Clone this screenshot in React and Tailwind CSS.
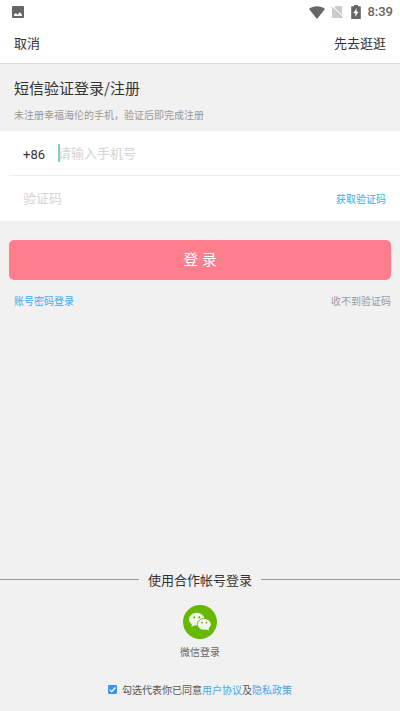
import React, { useState } from "react";

function StatusBar() {
    return (
        <div className="flex h-6 items-center justify-between pl-3 pr-[7px] text-[#666666]">
            <svg viewBox="0 0 12 12" className="h-3 w-3" aria-hidden="true">
                <rect width="12" height="12" rx="1" fill="currentColor" />
                <path d="M2 10V8.8L3.8 7l1.6 1.8L7.8 6.2 10 8.8V10z" fill="#fff" />
            </svg>
            <div className="flex items-center">
                <svg viewBox="0 0 16 13" className="h-[13px] w-4" aria-hidden="true">
                    <path d="M8 13 0 3C2.200 1.200 5 .3 8 .3S13.800 1.200 16 3z" fill="currentColor" />
                </svg>
                <svg viewBox="0 0 12 14" className="ml-[6px] h-[14px] w-3" aria-hidden="true">
                    <path d="M4.500 1H10a1 1 0 0 1 1 1v11H2a1 1 0 0 1-1-1V4.500z" fill="#cccccc" />
                    <path d="M1.200 1.200 12.200 12.200" stroke="#fff" strokeWidth="1.200" />
                    <path d="M.4 2 11.400 13" stroke="#b5b5b5" strokeWidth="1" />
                </svg>
                <svg viewBox="0 0 10 14" className="ml-2 h-[14px] w-[10px]" aria-hidden="true">
                    <path d="M3 0h4v1.300h2.200a.6.6 0 0 1 .6.6v11.500a.6.6 0 0 1-.6.6H.8a.6.6 0 0 1-.6-.6V1.900a.6.6 0 0 1 .6-.6H3z" fill="currentColor" />
                    <path d="M5.800 3 2.300 8.300h2.200L4 12l3.600-5.300H5.400z" fill="#fff" />
                </svg>
                <span className="ml-[6px] font-[Roboto,sans-serif] text-[13px] font-medium leading-4">8:39</span>
            </div>
        </div>
    );
}

function WechatIcon() {
    return (
        <svg viewBox="0 0 34 34" className="h-[34px] w-[34px]" aria-hidden="true">
            <circle cx="17" cy="17" r="17" fill="#66b800" />
            <g fill="#f1f5ea">
                <ellipse cx="13.700" cy="14.200" rx="7.700" ry="6.400" />
                <path d="M9 18.500 8.300 22l3.700-2z" />
            </g>
            <ellipse cx="21.200" cy="19.300" rx="7.300" ry="6.200" fill="#66b800" />
            <g fill="#f1f5ea">
                <ellipse cx="21.200" cy="19.300" rx="6.600" ry="5.500" />
                <path d="m23 24 3 1.800-.5-3.300z" />
            </g>
            <g fill="#66b800">
                <circle cx="11.200" cy="12.200" r="1" />
                <circle cx="16.300" cy="12.200" r="1" />
                <circle cx="19" cy="17.700" r=".85" />
                <circle cx="23.400" cy="17.700" r=".85" />
            </g>
        </svg>
    );
}

export default function App() {
    const [phone, setPhone] = useState("");
    const [code, setCode] = useState("");
    const [agreed, setAgreed] = useState(true);

    return (
        <div className="flex min-h-screen flex-col bg-[#f1f1f1] font-['Noto_Sans_CJK_SC',sans-serif] text-[#333333]">
            {/* Header */}
            <header className="border-b border-[#dcdcdc] bg-white">
                <StatusBar />
                <nav className="flex h-[39px] items-center justify-between px-[14px] pb-[2px] text-[13px]">
                    <button type="button">取消</button>
                    <button type="button">先去逛逛</button>
                </nav>
            </header>

            <main>
                <div className="px-[14px] pb-2 pt-[14px]">
                    <h1 className="text-[15px] leading-5">短信验证登录/注册</h1>
                    <p className="mt-[9px] text-[10px] leading-4 text-[#999999]">未注册幸福海伦的手机，验证后即完成注册</p>
                </div>

                <form onSubmit={(e) => e.preventDefault()}>
                    <div className="bg-white pl-[9px]">
                        <div className="flex h-[45px] items-center border-b border-[#ebebeb] pl-[14px] pr-[14px]">
                            <label htmlFor="phone" className="w-[35px] pt-[3px] font-[Roboto,sans-serif] text-[13px] leading-5">+86</label>
                            <div className="relative flex-1">
                                <input
                                    id="phone"
                                    type="tel"
                                    value={phone}
                                    onChange={(e) => setPhone(e.target.value)}
                                    placeholder="请输入手机号"
                                    className="block w-full text-[13px] leading-5 outline-none placeholder:text-[#d4d4d4]"
                                />
                                <span className="absolute left-0 top-px h-[18px] w-[2px] bg-[#80cbc4]" />
                            </div>
                        </div>
                        <div className="flex h-[45px] items-center pl-[14px] pr-[14px]">
                            <input
                                type="text"
                                aria-label="验证码"
                                value={code}
                                onChange={(e) => setCode(e.target.value)}
                                placeholder="验证码"
                                className="min-w-0 flex-1 pb-[2px] text-[13px] leading-5 outline-none placeholder:text-[#d4d4d4]"
                            />
                            <button type="button" className="text-[10px] text-[#42aaea]">获取验证码</button>
                        </div>
                    </div>

                    <div className="px-[9px] pt-[19px]">
                        <button type="submit" className="h-10 w-full rounded-[5px] bg-[#ff7e8e] pb-[2px] text-[15px] text-white">登 录</button>
                    </div>
                </form>

                <div className="flex items-center justify-between pl-[14px] pr-[9px] pt-[13px] text-[10px] leading-4">
                    <a href="#password" className="text-[#42aaea]">账号密码登录</a>
                    <a href="#help" className="text-[#999999]">收不到验证码</a>
                </div>
            </main>

            {/* Partner login */}
            <footer className="mt-auto flex flex-col items-center pb-[13px]">
                <div className="flex w-full items-center gap-[9px]">
                    <span className="mb-[2px] h-px flex-1 bg-[#999999]" />
                    <h2 className="text-[13px] leading-5">使用合作帐号登录</h2>
                    <span className="mb-[2px] h-px flex-1 bg-[#999999]" />
                </div>
                <button type="button" className="mt-[15px] flex flex-col items-center gap-[5px] text-[10px] leading-4 text-[#666666]">
                    <WechatIcon />
                    微信登录
                </button>
                <div className="mt-[22px] flex items-center gap-[5px] text-[10px] leading-4 text-[#555555]">
                    <span className="relative mb-[2px] block h-[9px] w-[9px]">
                        <input
                            id="agree"
                            type="checkbox"
                            checked={agreed}
                            onChange={(e) => setAgreed(e.target.checked)}
                            className="block h-[9px] w-[9px] appearance-none rounded-[1px] border border-[#3b94ee] bg-white checked:bg-[#3b94ee]"
                        />
                        {agreed && (
                            <svg viewBox="0 0 9 9" className="pointer-events-none absolute inset-0 h-[9px] w-[9px]" aria-hidden="true">
                                <path d="m1.700 4.600 2 2L7.400 2.500" fill="none" stroke="#fff" strokeWidth="1.200" />
                            </svg>
                        )}
                    </span>
                    <p>
                        <label htmlFor="agree">勾选代表你已同意</label>
                        <a href="#terms" className="text-[#42aaea]">用户协议</a>及<a href="#privacy" className="text-[#42aaea]">隐私政策</a>
                    </p>
                </div>
            </footer>
        </div>
    );
}
